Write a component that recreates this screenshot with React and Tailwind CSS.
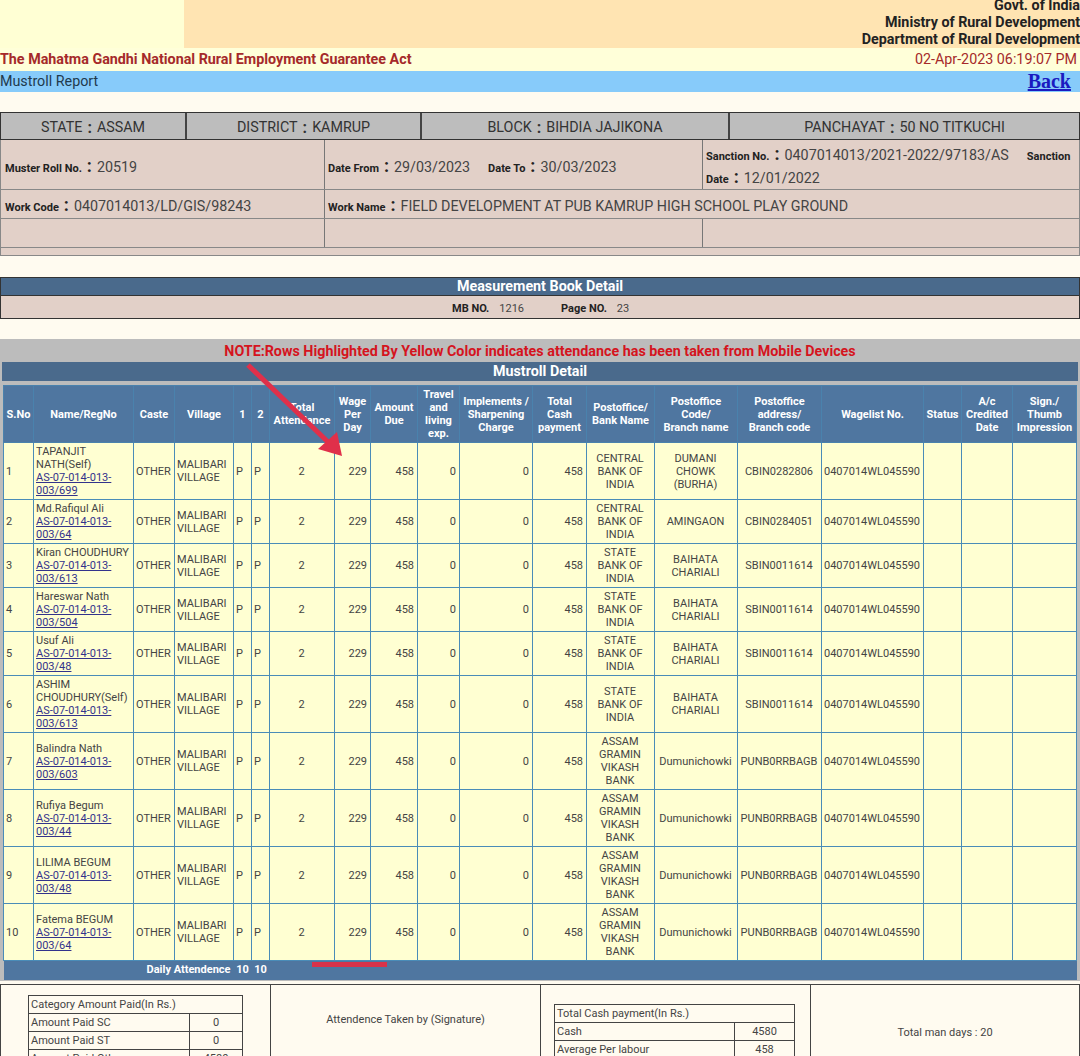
const font = { fontFamily: 'Roboto, "Liberation Sans", sans-serif' }

const widths = [30, 100, 41, 59, 18, 18, 65, 36, 47, 42, 73, 54, 68, 83, 84, 102, 38, 51, 64]

const headers = [
  ['S.No'],
  ['Name/RegNo'],
  ['Caste'],
  ['Village'],
  ['1'],
  ['2'],
  ['Total', 'Attendance'],
  ['Wage', 'Per', 'Day'],
  ['Amount', 'Due'],
  ['Travel', 'and', 'living', 'exp.'],
  ['Implements /', 'Sharpening', 'Charge'],
  ['Total', 'Cash', 'payment'],
  ['Postoffice/', 'Bank Name'],
  ['Postoffice', 'Code/', 'Branch name'],
  ['Postoffice', 'address/', 'Branch code'],
  ['Wagelist No.'],
  ['Status'],
  ['A/c', 'Credited', 'Date'],
  ['Sign./', 'Thumb', 'Impression'],
]

const CENTRAL = ['CENTRAL', 'BANK OF', 'INDIA']
const STATE = ['STATE', 'BANK OF', 'INDIA']
const ASSAM = ['ASSAM', 'GRAMIN', 'VIKASH', 'BANK']
const BAIHATA = ['BAIHATA', 'CHARIALI']

const rows = [
  { h: 'h-[57px]', name: ['TAPANJIT', 'NATH(Self)'], reg: 'AS-07-014-013-', reg2: '003/699', bank: CENTRAL, branch: ['DUMANI', 'CHOWK', '(BURHA)'], code: 'CBIN0282806' },
  { h: 'h-[44px]', name: ['Md.Rafiqul Ali'], reg: 'AS-07-014-013-', reg2: '003/64', bank: CENTRAL, branch: ['AMINGAON'], code: 'CBIN0284051' },
  { h: 'h-[44px]', name: ['Kiran CHOUDHURY'], reg: 'AS-07-014-013-', reg2: '003/613', bank: STATE, branch: BAIHATA, code: 'SBIN0011614' },
  { h: 'h-[44px]', name: ['Hareswar Nath'], reg: 'AS-07-014-013-', reg2: '003/504', bank: STATE, branch: BAIHATA, code: 'SBIN0011614' },
  { h: 'h-[44px]', name: ['Usuf Ali'], reg: 'AS-07-014-013-', reg2: '003/48', bank: STATE, branch: BAIHATA, code: 'SBIN0011614' },
  { h: 'h-[57px]', name: ['ASHIM', 'CHOUDHURY(Self)'], reg: 'AS-07-014-013-', reg2: '003/613', bank: STATE, branch: BAIHATA, code: 'SBIN0011614' },
  { h: 'h-[57px]', name: ['Balindra Nath'], reg: 'AS-07-014-013-', reg2: '003/603', bank: ASSAM, branch: ['Dumunichowki'], code: 'PUNB0RRBAGB' },
  { h: 'h-[57px]', name: ['Rufiya Begum'], reg: 'AS-07-014-013-', reg2: '003/44', bank: ASSAM, branch: ['Dumunichowki'], code: 'PUNB0RRBAGB' },
  { h: 'h-[57px]', name: ['LILIMA BEGUM'], reg: 'AS-07-014-013-', reg2: '003/48', bank: ASSAM, branch: ['Dumunichowki'], code: 'PUNB0RRBAGB' },
  { h: 'h-[57px]', name: ['Fatema BEGUM'], reg: 'AS-07-014-013-', reg2: '003/64', bank: ASSAM, branch: ['Dumunichowki'], code: 'PUNB0RRBAGB' },
]

function Lines({ items }) {
  return items.map((t) => <div key={t} className="whitespace-nowrap">{t}</div>)
}

function Label({ children }) {
  return <span className="text-[11px] font-bold text-[#222]">{children}</span>
}

function Colon() {
  return <span className="text-[18px] font-bold text-[#222] mx-[5px]">:</span>
}

function Td({ className = '', children }) {
  return (
    <td className={`border border-[#4a8cb8] pl-[2px] pr-[3px] py-0 overflow-hidden whitespace-nowrap ${className}`}>
      {children}
    </td>
  )
}

function Panchayat() {
  const cells = [
    ['w-[186px]', 'STATE', 'ASSAM'],
    ['w-[235px]', 'DISTRICT', 'KAMRUP'],
    ['w-[308px]', 'BLOCK', 'BIHDIA JAJIKONA'],
    ['', 'PANCHAYAT', '50 NO TITKUCHI'],
  ]
  return (
    <div className="mt-[20px] flex h-[28px] border border-[#333] bg-[#bdbdbd]">
      {cells.map(([w, k, v], i) => (
        <div key={k} className={`${w} ${i === 3 ? 'flex-1' : 'border-r-2 border-[#444]'} flex items-center justify-center pt-[3px] text-[14.3px] text-[#333]`}>
          {k}<span className="font-bold text-[16px] leading-[16px] mx-[5px]">:</span>{v}
        </div>
      ))}
    </div>
  )
}

function MusterInfo() {
  const c1 = 'w-[324px] border-r border-[#777]'
  const c2 = 'w-[378px] border-r border-[#777]'
  return (
    <div className="bg-[#e2d0c8] border-x border-[#888] text-[14.3px] text-[#444] whitespace-nowrap">
      <div className="flex h-[50px] border-b border-[#888]">
        <div className={`${c1} pl-[4px] pt-[14px] leading-[24px]`}>
          <Label>Muster Roll No.</Label><Colon />20519
        </div>
        <div className={`${c2} pl-[3px] pt-[14px] leading-[24px]`}>
          <Label>Date From</Label><Colon />29/03/2023
          <span className="inline-block w-[18px]" />
          <Label>Date To</Label><Colon />30/03/2023
        </div>
        <div className="flex-1 pl-[3px] pt-[4px] leading-[20px] overflow-hidden">
          <Label>Sanction No.</Label><Colon />0407014013/2021-2022/97183/AS
          <span className="inline-block w-[18px]" />
          <Label>Sanction</Label>
          <div><Label>Date</Label><Colon />12/01/2022</div>
        </div>
      </div>
      <div className="flex h-[29px] border-b border-[#888]">
        <div className={`${c1} pl-[4px] pt-[3px] leading-[24px]`}>
          <Label>Work Code</Label><Colon />0407014013/LD/GIS/98243
        </div>
        <div className="flex-1 pl-[3px] pt-[3px] leading-[24px]">
          <Label>Work Name</Label><Colon />FIELD DEVELOPMENT AT PUB KAMRUP HIGH SCHOOL PLAY GROUND
        </div>
      </div>
      <div className="flex h-[29px] border-b border-[#888]">
        <div className={c1} />
        <div className={c2} />
      </div>
      <div className="h-[8px] border-b border-[#888]" />
    </div>
  )
}

function MbDetail() {
  return (
    <div className="mt-[21px] border border-[#333]">
      <div className="h-[18px] bg-[#4a6a8c] flex items-center justify-center text-[14.3px] font-bold text-white border-b border-[#333]">
        Measurement Book Detail
      </div>
      <div className="h-[22px] bg-[#e2d0c8] flex items-center pl-[451px] pt-[5px] text-[11px] text-[#444]">
        <b className="text-[#222]">MB NO.</b><span className="ml-[10px] mr-[37px]">1216</span>
        <b className="text-[#222]">Page NO.</b><span className="ml-[10px]">23</span>
      </div>
    </div>
  )
}

function MustrollTable() {
  return (
    <table className="table-fixed border-collapse w-[1073px] ml-[3px] mt-[4px] text-[11px] leading-[13px] text-[#444]">
      <colgroup>
        {widths.map((w, i) => <col key={i} style={{ width: w }} />)}
      </colgroup>
      <thead>
        <tr className="h-[57px] bg-[#4f76a0] text-white font-bold text-center">
          {headers.map((lines, i) => (
            <th key={i} className="border border-[#4a82ad] px-0 font-bold">
              <Lines items={lines} />
            </th>
          ))}
        </tr>
      </thead>
      <tbody>
        {rows.map((r, i) => (
          <tr key={i} className={`${r.h} bg-[#ffffd2]`}>
            <Td>{i + 1}</Td>
            <Td>
              <Lines items={r.name} />
              <a className="block underline text-[#33338c]">{r.reg}</a>
              <a className="block underline text-[#33338c]">{r.reg2}</a>
            </Td>
            <Td>OTHER</Td>
            <Td><div>MALIBARI</div><div>VILLAGE</div></Td>
            <Td>P</Td>
            <Td>P</Td>
            <Td className="text-center">2</Td>
            <Td className="text-right">229</Td>
            <Td className="text-right">458</Td>
            <Td className="text-right">0</Td>
            <Td className="text-right">0</Td>
            <Td className="text-right">458</Td>
            <Td className="text-center"><Lines items={r.bank} /></Td>
            <Td className="text-center"><Lines items={r.branch} /></Td>
            <Td className="text-center">{r.code}</Td>
            <Td>0407014WL045590</Td>
            <Td />
            <Td />
            <Td />
          </tr>
        ))}
        <tr className="h-[19px] bg-[#4f76a0] text-white font-bold">
          <td colSpan={4} className="text-right pr-[3px] pb-[1px]">Daily Attendence</td>
          <td className="text-center pb-[1px]">10</td>
          <td className="text-center pb-[1px]">10</td>
          <td colSpan={13} />
        </tr>
      </tbody>
    </table>
  )
}

function SmallTable({ className, first, title, data }) {
  return (
    <table className={`table-fixed border-collapse text-[11px] leading-[13px] text-[#444] ${className}`}>
      <colgroup>
        <col className={first} />
        <col />
      </colgroup>
      <tbody>
        <tr className="h-[18px]">
          <td colSpan={2} className="border border-[#444] px-[2px]">{title}</td>
        </tr>
        {data.map(([k, v]) => (
          <tr key={k} className="h-[18px]">
            <td className="border border-[#444] px-[2px]">{k}</td>
            <td className="border border-[#444] text-center">{v}</td>
          </tr>
        ))}
      </tbody>
    </table>
  )
}

function Footer() {
  return (
    <div className="flex mt-[3px] h-[120px] border-t border-x border-[#444] text-[11px] text-[#444]">
      <div className="w-[270px] border-r border-[#444] pl-[27px] pt-[10px]">
        <SmallTable
          className="w-[215px]"
          first="w-[161px]"
          title="Category Amount Paid(In Rs.)"
          data={[['Amount Paid SC', '0'], ['Amount Paid ST', '0'], ['Amount Paid Oth.', '4580']]}
        />
      </div>
      <div className="w-[270px] border-r border-[#444] flex justify-center pt-[27px]">
        Attendence Taken by (Signature)
      </div>
      <div className="w-[270px] border-r border-[#444] pl-[13px] pt-[19px]">
        <SmallTable
          className="w-[241px]"
          first="w-[180px]"
          title="Total Cash payment(In Rs.)"
          data={[['Cash', '4580'], ['Average Per labour', '458']]}
        />
      </div>
      <div className="flex-1 flex justify-center pt-[40px]">Total man days : 20</div>
    </div>
  )
}

export default function App() {
  return (
    <div className="relative w-[1080px] h-[1056px] overflow-hidden bg-[#fffbf0]" style={font}>
      <div className="flex h-[48px] bg-[#ffe4b2]">
        <div className="w-[184px] bg-[#ffffd4]" />
        <div className="flex-1 text-right text-[14.3px] leading-[17px] font-bold text-[#222] -mt-[3px]">
          <div>Govt. of India</div>
          <div>Ministry of Rural Development</div>
          <div>Department of Rural Development</div>
        </div>
      </div>
      <div className="flex items-center justify-between h-[23px] bg-[#ffffd9] text-[14.3px]">
        <span className="font-bold text-[#a52a2a]">The Mahatma Gandhi National Rural Employment Guarantee Act</span>
        <span className="text-[#a52a2a] pr-[3px]">02-Apr-2023 06:19:07 PM</span>
      </div>
      <div className="flex items-center justify-between h-[21px] bg-[#87cbfa] text-[14.3px] text-[#1f3a4d]">
        <span>Mustroll Report</span>
        <a className="font-bold text-[20px] leading-[20px] pb-[2px] underline text-[#1a1ac0] pr-[9px]" style={{ fontFamily: '"Liberation Serif", serif' }}>Back</a>
      </div>

      <Panchayat />
      <MusterInfo />
      <MbDetail />

      <div className="mt-[20px] h-[642px] bg-[#bcbcbc] pt-[3px]">
        <div className="text-center text-[14.3px] leading-[18px] font-bold text-[#d5141e]">
          NOTE:Rows Highlighted By Yellow Color indicates attendance has been taken from Mobile Devices
        </div>
        <div className="mx-[2px] mt-[2px] h-[19px] pt-[1px] bg-[#4a6a8c] flex items-center justify-center text-[14.3px] font-bold text-white">
          Mustroll Detail
        </div>
        <MustrollTable />
      </div>

      <Footer />

      {/* hand drawn markup on top of the screenshot */}
      <svg className="absolute left-0 top-0 pointer-events-none" width="1080" height="1056">
        <line x1="248" y1="365" x2="328" y2="442" stroke="#e0304a" strokeWidth="5" />
        <polygon points="342,456 318,449 337,432" fill="#e0304a" />
        <rect x="312" y="962" width="75" height="5" fill="#d9324a" />
      </svg>
    </div>
  )
}
